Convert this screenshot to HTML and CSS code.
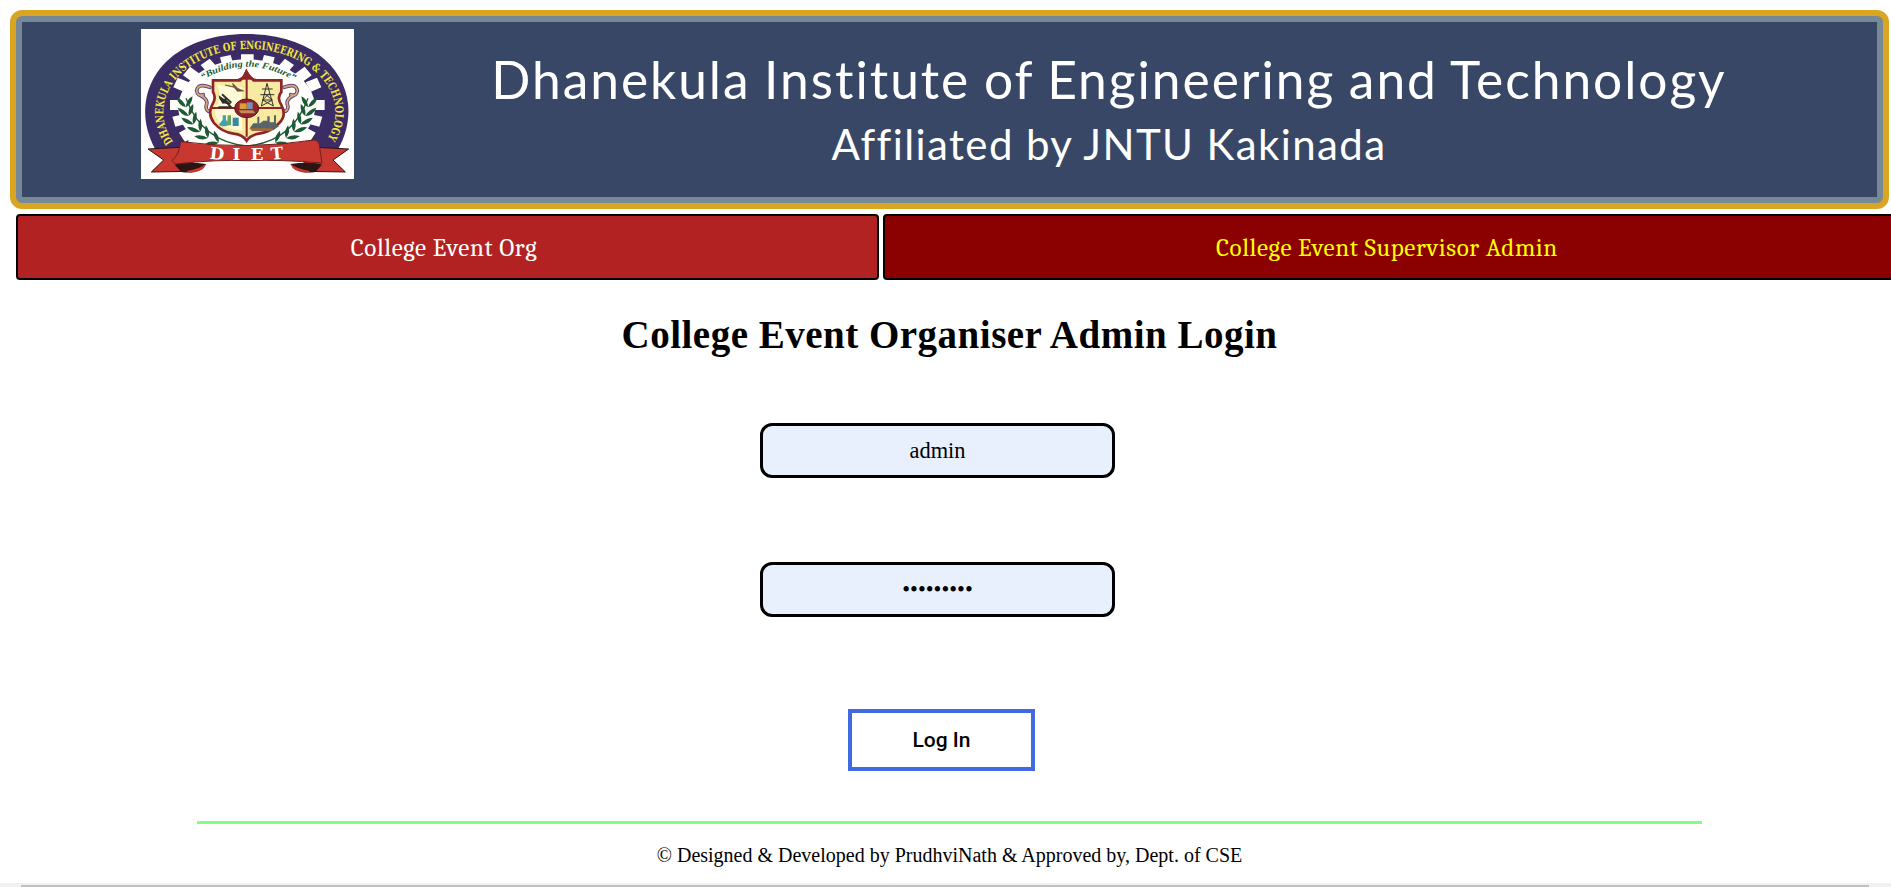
FILE: index.html
```html
<!DOCTYPE html>
<html lang="en">
<head>
<meta charset="utf-8">
<title>College Event Organiser</title>
<link rel="stylesheet" href="styles.css">
</head>
<body>
<header class="banner">
  <div class="banner-inner">
    <svg class="logo" viewBox="33 27 639 450" preserveAspectRatio="none" role="img" aria-label="DIET crest">
      <defs>
        <path id="ring" d="M130 366A258 190 0 1 1 586 366"/>
        <path id="motto" d="M218 180Q350 100 488 180"/>
        <g id="leafpair"><path d="M0 0Q-22-8-24-34Q-4-24 0 0Q4-24 24-30Q20-6 0 0Z"/></g>
        <g id="branch">
          <path d="M350 378Q215 365 168 235" fill="none" stroke="#1c5a35" stroke-width="4"/>
          <use href="#leafpair" transform="translate(168 262) rotate(-8)"/>
          <use href="#leafpair" transform="translate(176 288) rotate(-18)"/>
          <use href="#leafpair" transform="translate(190 313) rotate(-26)"/>
          <use href="#leafpair" transform="translate(210 335) rotate(-36)"/>
          <use href="#leafpair" transform="translate(234 354) rotate(-48)"/>
          <use href="#leafpair" transform="translate(266 368) rotate(-60)"/>
        </g>
        <g id="scroll" fill="none" stroke-linecap="round">
          <path d="M240 202Q204 188 200 212Q202 230 220 224M210 226Q238 238 228 260Q230 280 246 270" stroke="#5b4a78" stroke-width="11"/>
          <path d="M240 202Q204 188 200 212Q202 230 220 224M210 226Q238 238 228 260Q230 280 246 270" stroke="#dba87c" stroke-width="5"/>
        </g>
        <g id="tail">
          <path d="M54 387L150 382L190 412L184 454L64 456L101 420Z" fill="#c83730" stroke="#251414" stroke-width="3"/>
          <path d="M134 434Q166 424 229 432L216 446Q190 462 154 456Z" fill="#2a1512"/>
          <path d="M172 452Q206 448 229 431L222 444Q204 460 172 457Z" fill="#c83730"/>
        </g>
      </defs>
      <rect x="33" y="27" width="639" height="450" fill="#fffefc"/>
      <path d="M75 386C-10 230 90 42 350 42S712 230 625 386Z" fill="#3b2c66"/>
      <ellipse cx="350" cy="262" rx="205" ry="144" fill="#fffefc"/>
      <g fill="#fffefc">
        <path d="M333 103h38v28h-38zM333 375h38v20h-38z"/>
        <path d="M270 112l32-7 8 28-32 8zM434 112l-32-7-8 28 32 8zM212 135l27-19 22 25-28 18zM492 135l-27-19-22 25 28 18zM159 166l21-26 30 22-23 24zM545 166l-21-26-30 22 23 24zM130 202l13-29 34 14-16 28zM574 202l-13-29-34 14 16 28zM120 240h35v30h-35zM549 240h35v30h-35zM127 290l34-7 8 28-33 9zM577 290l-34-7-8 28 33 9zM147 338l30-16 18 26-30 18zM557 338l-30-16-18 26 30 18z"/>
        <path d="M175 335H530V400H175z"/>
      </g>
      <text class="ring-text"><textPath href="#ring" textLength="886" lengthAdjust="spacingAndGlyphs">DHANEKULA INSTITUTE OF ENGINEERING &amp; TECHNOLOGY</textPath></text>
      <text class="motto-text"><textPath href="#motto" textLength="290" lengthAdjust="spacingAndGlyphs">“Building the Future”</textPath></text>
      <g fill="#1c5a35"><use href="#branch"/><use href="#branch" transform="translate(702 0) scale(-1 1)"/></g>
      <use href="#scroll"/><use href="#scroll" transform="translate(702 0) scale(-1 1)"/>
      <path d="M249 181H331Q343 170 349 155Q357 170 371 181H454V216Q440 232 453 253Q472 286 447 310Q420 337 387 341Q360 345 350 362Q338 344 311 341Q275 336 252 309Q230 280 249 250Q259 232 249 216Z" fill="#f8eaa0" stroke="#8e252b" stroke-width="8"/>
      <path d="M262 194Q300 204 336 200V332Q280 330 259 292Q248 270 264 250Q274 225 262 194Z" fill="#fffbd7"/>
      <path d="M350 177V350M243 264H458" stroke="#8e252b" stroke-width="6"/>
      <path d="M315 179Q340 174 343 160L349 146L356 160Q360 174 386 179Z" fill="#8e252b"/>
      <g stroke="#31322f" stroke-width="3" fill="none">
        <path d="M411 190L394 258M411 190L430 258M396 207H428M391 224H433M398 240H427M403 220L427 240L394 258M418 220L398 240L430 258"/>
        <path d="M276 223L304 248M277 250L288 235M265 262H303L284 239" stroke-width="6"/>
      </g>
      <path d="M266 226Q268 256 304 252Z" fill="#292d2b"/>
      <path d="M285 195L312 202L322 214L341 213L323 205L308 190L310 200Z" fill="#963e32" stroke="#46584b" stroke-width="2"/>
      <path d="M278 286H288V299L297 315Q281 323 266 315L278 299Z" fill="#459fb4"/><path d="M293 286H303V316H291Z" fill="#67a45c"/><path d="M308 293H326V318H308Z" fill="#3689a4"/>
      <path d="M359 325L370 310H382V290H388V311L400 302H412V289H419V307H432V286H438V313L448 318L430 331H370Z" fill="#58646b"/><path d="M358 325H430L421 333H366Z" fill="#a56935"/>
      <ellipse cx="350" cy="265" rx="36" ry="28" fill="#8e252b" stroke="#58171e" stroke-width="3"/>
      <path d="M329 250H350V267H329z" fill="#d9a136"/><path d="M351 247H368V267H351z" fill="#7a90b4"/><path d="M326 271H369L376 280H333z" fill="#c78a60"/>
      <use href="#tail"/><use href="#tail" transform="translate(710 0) scale(-1 1)"/>
      <path d="M152 365Q350 391 552 360Q566 361 568 376L576 429Q450 418 355 422Q260 418 136 432L126 421Q148 405 152 365Z" fill="#c83730" stroke="#6f211e" stroke-width="3"/>
      <g class="diet-text"><text x="261" y="419" transform="rotate(6 261 404)">D</text><text x="319" y="421">I</text><text x="381" y="421">E</text><text x="441" y="418" transform="rotate(-5 441 404)">T</text></g>
    </svg>
    <div class="college">
      <div class="college-name">Dhanekula Institute of Engineering and Technology</div>
      <div class="affiliation">Affiliated by JNTU Kakinada</div>
    </div>
  </div>
</header>
<nav class="tabs">
  <a class="tab tab-org"><span>College Event Org</span></a>
  <a class="tab tab-admin"><span>College Event Supervisor Admin</span></a>
</nav>
<main class="login">
  <h1 class="title">College Event Organiser Admin Login</h1>
  <form class="form">
    <input class="field" type="text" value="admin">
    <div class="field field-password">•••••••••</div>
    <button class="submit" type="button">Log In</button>
  </form>
</main>
<footer class="footer">© Designed &amp; Developed by PrudhviNath &amp; Approved by, Dept. of CSE</footer>
<div class="scrollbar"><div class="thumb"></div></div>
</body>
</html>
```
FILE: styles.css
```css
* { box-sizing: border-box; }
body {
  margin: 0;
  height: 887px;
  overflow: hidden;
  display: flex;
  flex-direction: column;
  background: #fff;
  color: #000;
  font-family: "Liberation Serif", "Times New Roman", serif;
}
.banner {
  flex: none;
  margin: 10px 2px 0 10px;
  height: 199px;
  border: 6px solid #daa520;
  border-radius: 12px;
  background: #778899;
  padding: 6px;
}
.banner-inner {
  height: 175px;
  background: #384766;
  display: flex;
  padding: 7px 0 0 119px;
}
.logo { flex: none; width: 213px; height: 150px; }
.ring-text { font: bold 34px "DejaVu Serif", serif; fill: #f3e63c; }
.motto-text { font: italic bold 27px "Liberation Serif", serif; fill: #1c5a35; }
.diet-text { font: bold 50px "DejaVu Serif", serif; fill: #fff; text-anchor: middle; }
.college {
  width: 1510px;
  color: #fff;
  font-family: "Century Gothic", Lato, sans-serif;
  text-align: center;
  white-space: nowrap;
}
.college-name { margin-top: 20px; font-size: 51.5px; line-height: 60px; letter-spacing: 1.95px; word-spacing: -1.5px; }
.affiliation { margin-top: 9px; font-size: 42px; line-height: 52px; letter-spacing: 1.4px; }
.tabs { flex: none; display: flex; gap: 4px; margin: 5px 0 0 16px; }
.tab {
  flex: none;
  height: 66px;
  border: 2px solid #000;
  border-radius: 4px;
  display: flex;
  align-items: center;
  justify-content: center;
  font: 25px Cambria, "Liberation Serif", serif;
  letter-spacing: 0.6px;
}
.tab-org { width: 863px; padding-right: 7px; background: #b22222; color: #fff; }
.tab-admin { width: 1012px; padding-right: 4px; background: #8b0000; color: #ff0; }
.login { display: flex; flex-direction: column; align-items: center; }
.title { margin: 32px 0 0 8px; font-size: 39px; line-height: 46px; letter-spacing: 0.5px; white-space: nowrap; }
.form { display: flex; flex-direction: column; align-items: center; margin-top: 65px; }
.field {
  width: 355px;
  height: 55px;
  margin: 0 16px 0 0;
  padding: 0;
  border: 3px solid #000;
  border-radius: 12px;
  background: #e8f0fe;
  color: #000;
  font: 22.4px "Liberation Serif", serif;
  text-align: center;
}
.field-password { margin-top: 84px; line-height: 49px; }
.submit {
  width: 187px;
  height: 62px;
  margin: 92px 8px 0 0;
  padding: 0;
  border: 4px solid #4169e1;
  background: #fff;
  color: #000;
  font: 500 21px Roboto, sans-serif;
}
.footer {
  width: 1505px;
  margin: 50px 0 0 197px;
  padding-top: 19px;
  border-top: 3px solid #80ff80;
  font-size: 20px;
  line-height: 24px;
  text-align: center;
}
.scrollbar { margin-top: auto; height: 4px; padding: 2px 22px 0 21px; background: #f0f0f0; }
.thumb { height: 2px; background: #c0c0c0; }
```
